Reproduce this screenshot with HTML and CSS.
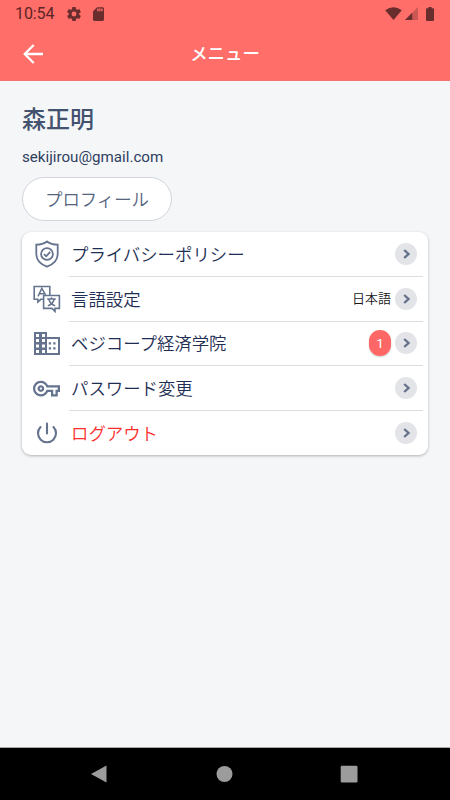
FILE: index.html
```html
<!DOCTYPE html>
<html lang="ja">
<head>
<meta charset="utf-8">
<title>メニュー</title>
<link rel="stylesheet" href="styles.css">
</head>
<body>
<header class="top">
  <div class="status">
    <span class="clock">10:54</span>
    <svg class="cog" viewBox="2 2 20 20"><path d="M12 15.5A3.5 3.5 0 0 1 8.500 12 3.500 3.500 0 0 1 12 8.500a3.500 3.500 0 0 1 3.500 3.500 3.500 3.500 0 0 1-3.500 3.500m7.430-2.530c.040-.320.070-.640.070-.970s-.030-.660-.070-1l2.110-1.630c.190-.150.240-.420.120-.640l-2-3.460c-.120-.220-.390-.310-.610-.220l-2.490 1c-.520-.390-1.060-.730-1.690-.980l-.370-2.650A.506.506 0 0 0 14 2h-4c-.250 0-.460.180-.500.420l-.370 2.650c-.630.250-1.170.590-1.690.980l-2.490-1c-.220-.090-.490 0-.610.220l-2 3.460c-.130.220-.070.490.120.640L4.570 11c-.040.340-.070.670-.070 1s.030.650.070.970l-2.110 1.660c-.190.150-.250.420-.120.640l2 3.460c.120.220.390.300.610.220l2.490-1.010c.520.400 1.060.740 1.690.990l.370 2.650c.040.240.250.420.500.420h4c.250 0 .460-.180.500-.420l.370-2.650c.630-.260 1.170-.590 1.690-.990l2.490 1.010c.220.080.490 0 .610-.220l2-3.460c.120-.220.070-.490-.120-.640z"/></svg>
    <svg class="sd" viewBox="4 2 16 20"><path d="M18 2h-8L4.020 8 4 20c0 1.100.9 2 2 2h12c1.100 0 2-.9 2-2V4c0-1.100-.9-2-2-2zm-6 6h-2V4h2v4zm3 0h-2V4h2v4zm3 0h-2V4h2v4z"/></svg>
    <span class="spacer"></span>
    <svg class="wifi" viewBox="0 0 17 13"><path d="M.2 3.200Q8.500-2.900 16.800 3.200L8.500 13z"/></svg>
    <svg class="signal" viewBox="0 0 13 13"><path opacity=".35" d="M13 0v13H0z"/><path d="M7.200 5.800V13H0z"/></svg>
    <svg class="battery" viewBox="0 0 8 14"><path d="M2.400 0h3.200v1.300H7a1 1 0 0 1 1 1V13a1 1 0 0 1-1 1H1a1 1 0 0 1-1-1V2.300a1 1 0 0 1 1-1h1.400z"/></svg>
  </div>
  <div class="appbar">
    <svg class="back" viewBox="0 0 20 20"><path d="M20 10H1.800M10.700 1 1.700 10l9 9"/></svg>
    <h1>メニュー</h1>
  </div>
</header>
<main>
  <h2>森正明</h2>
  <p class="email">sekijirou@gmail.com</p>
  <button class="profile">プロフィール</button>
  <ul class="card">
    <li>
      <span class="icon"><svg class="line" width="26" height="28" viewBox="0 0 26 28"><path d="M13 1.500c3 2.300 6.500 3.200 10.700 3.200V14c0 6-4.200 10.300-10.700 12.600C6.500 24.300 2.300 20 2.300 14V4.700C6.500 4.700 10 3.800 13 1.500z"/><circle cx="13" cy="14" r="5.900"/><path d="m10 14.200 2.200 2.100 4-4.400"/></svg></span>
      <div class="row"><span class="label">プライバシーポリシー</span><span class="go"><svg viewBox="0 0 7 10"><path d="m1.200 1 4.300 4-4.300 4"/></svg></span></div>
    </li>
    <li>
      <span class="icon"><svg class="line thin" width="28" height="28" viewBox="0 0 28 28"><path d="M10 14.300H7.800L4.900 17v-2.700H1.200V1.500h15.600v8.600"/><path d="M10.600 10.500h15.800v12.900H22v3l-3-3h-8.400z"/><path stroke-width="1.500" d="m5 11.400 3.800-8 3.800 6.400M6.300 8.700h5M14.200 14.100h8.600M18.500 12.200v1.900M21.200 14.300c-.8 3-3.200 5.500-6.400 6.600M15.800 14.300c.8 3 3.200 5.500 6.400 6.600"/></svg></span>
      <div class="row"><span class="label">言語設定</span><span class="value">日本語</span><span class="go"><svg viewBox="0 0 7 10"><path d="m1.200 1 4.300 4-4.300 4"/></svg></span></div>
    </li>
    <li>
      <span class="icon"><svg width="26" height="23" viewBox="0 0 26 23"><path fill-rule="evenodd" d="M0 0h13v5h13v18H0zM2 2v3h3V2zM8 2v3h3V2zM2 7v3h3V7zM8 7v3h3V7zM2 12.500v3h3v-3zM8 12.500v3h3v-3zM2 18v3h3v-3zM8 18v3h3v-3zM13 7v14h11V7z"/><path d="M14.800 10.300H17v2.300h-2.200zM19.300 10.300h2.200v2.300h-2.200zM14.800 15.200H17v2.300h-2.200zM19.300 15.200h2.200v2.300h-2.200z"/></svg></span>
      <div class="row"><span class="label">ベジコープ経済学院</span><span class="count">1</span><span class="go"><svg viewBox="0 0 7 10"><path d="m1.200 1 4.300 4-4.300 4"/></svg></span></div>
    </li>
    <li>
      <span class="icon"><svg width="27" height="27" viewBox="0 0 24 24"><path d="M22 19h-6v-4h-2.680c-1.140 2.420-3.600 4-6.320 4-3.860 0-7-3.140-7-7s3.140-7 7-7c2.720 0 5.170 1.580 6.320 4H24v6h-2v4zm-4-2h2v-4h2v-2H11.940l-.230-.670C11.010 8.340 9.110 7 7 7c-2.760 0-5 2.240-5 5s2.240 5 5 5c2.110 0 4.010-1.340 4.710-3.330l.230-.670H18v4zM7 15c-1.650 0-3-1.350-3-3s1.350-3 3-3 3 1.350 3 3-1.350 3-3 3zm0-4c-.550 0-1 .450-1 1s.450 1 1 1 1-.450 1-1-.450-1-1-1z"/></svg></span>
      <div class="row"><span class="label">パスワード変更</span><span class="go"><svg viewBox="0 0 7 10"><path d="m1.200 1 4.300 4-4.300 4"/></svg></span></div>
    </li>
    <li>
      <span class="icon"><svg class="line power" width="22" height="22" viewBox="0 0 22 22"><path d="M11 1.500v10M4.500 5a9 9 0 1 0 13 0"/></svg></span>
      <div class="row"><span class="label danger">ログアウト</span><span class="go"><svg viewBox="0 0 7 10"><path d="m1.200 1 4.300 4-4.300 4"/></svg></span></div>
    </li>
  </ul>
</main>
<nav class="navbar">
  <svg viewBox="0 0 18 18"><path d="M16.500.5v17L1 9z"/></svg>
  <svg viewBox="0 0 18 18"><circle cx="9.500" cy="9" r="8"/></svg>
  <svg viewBox="0 0 18 18"><rect x=".7" y=".7" width="16.800" height="16.800" rx="1.300"/></svg>
</nav>
</body>
</html>
```
FILE: styles.css
```css
* { box-sizing: border-box; }
body {
  margin: 0;
  width: 450px;
  height: 800px;
  display: flex;
  flex-direction: column;
  overflow: hidden;
  background: #f4f6f8;
  color: #1a2b50;
  font-family: Roboto, "Noto Sans CJK JP", sans-serif;
}
svg { display: block; flex: none; }
.top { height: 81px; background: #ff6e69; border-bottom: 1px solid #f4736e; }
.status { height: 27px; padding: 0 16px 0 15px; display: flex; align-items: center; fill: #6a2d2d; }
.clock { width: 39px; font-size: 16px; line-height: 28px; letter-spacing: -.1px; color: #5c2526; white-space: nowrap; }
.cog { width: 14px; height: 14px; margin-left: 13px; }
.sd { width: 11px; height: 14px; margin-left: 12px; }
.spacer { flex: 1; }
.wifi { width: 17px; height: 13px; margin-right: 3px; }
.signal { width: 13px; height: 13px; margin-right: 8px; }
.battery { width: 8px; height: 14px; }
.appbar { height: 53px; padding: 0 23px; display: grid; grid-template-columns: 20px 1fr 20px; align-items: center; }
.back { width: 20px; height: 20px; fill: none; stroke: #fff; stroke-width: 2.300; }
h1 { margin: 0; text-align: center; font-size: 17.400px; line-height: 26px; font-weight: 500; color: #fff; }
main { flex: 1; padding: 21px 22px 0; }
h2 { margin: 0; font-size: 24px; line-height: 36px; font-weight: 500; color: #43526f; }
.email { margin: 9px 0 10px; font-size: 15.150px; line-height: 20px; color: #2f3e5e; }
.profile {
  display: block; width: 150px; height: 44px; padding: 2px 0 0;
  border: 1px solid #d2d5dd; border-radius: 22px; background: #fff;
  font: 350 17.400px/40px Roboto, "Noto Sans CJK JP", sans-serif; color: #56647f;
}
.card {
  list-style: none; margin: 11px 0 0; padding: 0 5px 0 12px; width: 406px; height: 223px;
  display: grid; grid-template-rows: repeat(4, 44.750px) 1fr;
  background: #fff; border-radius: 9px; box-shadow: 0 1px 3px rgba(0, 0, 0, .28);
}
.card li { display: flex; }
.icon { width: 27px; margin: 0 9px 0 -1px; display: flex; align-items: center; justify-content: center; fill: #65738f; }
.line { fill: none; stroke: #65738f; stroke-width: 1.800; }
.thin { stroke-width: 1.600; }
.power { stroke-width: 2.100; stroke-linecap: round; }
.row { flex: 1; display: flex; align-items: center; padding: 0 6px 0 2px; border-bottom: 1px solid #dcdee2; }
.card li:last-child .row { border-bottom: 0; }
.label { flex: 1; padding-top: 2px; font-size: 17.400px; line-height: 26px; font-weight: 350; color: #1f2f54; }
.danger { color: #fb2d2d; }
.value { margin-right: 4px; font-size: 13px; line-height: 20px; color: #161616; font-weight: 350; }
.count {
  width: 22px; height: 26px; margin-right: 4px; border-radius: 11px; background: #ff6767; color: #fff;
  font-size: 13.500px; line-height: 27px; text-align: center; box-shadow: 0 1px 2px rgba(0, 0, 0, .2);
}
.go { width: 22px; height: 22px; display: flex; align-items: center; justify-content: center; border-radius: 50%; background: #e2e4e8; }
.go svg { width: 7px; height: 10px; fill: none; stroke: #66728c; stroke-width: 2.300; }
.navbar { height: 53px; padding: 0 92px 0 90px; display: flex; align-items: center; justify-content: space-between; background: #000; border-top: 1px solid #aaa; fill: #9c9c9c; }
.navbar svg { width: 18px; height: 18px; }
```
